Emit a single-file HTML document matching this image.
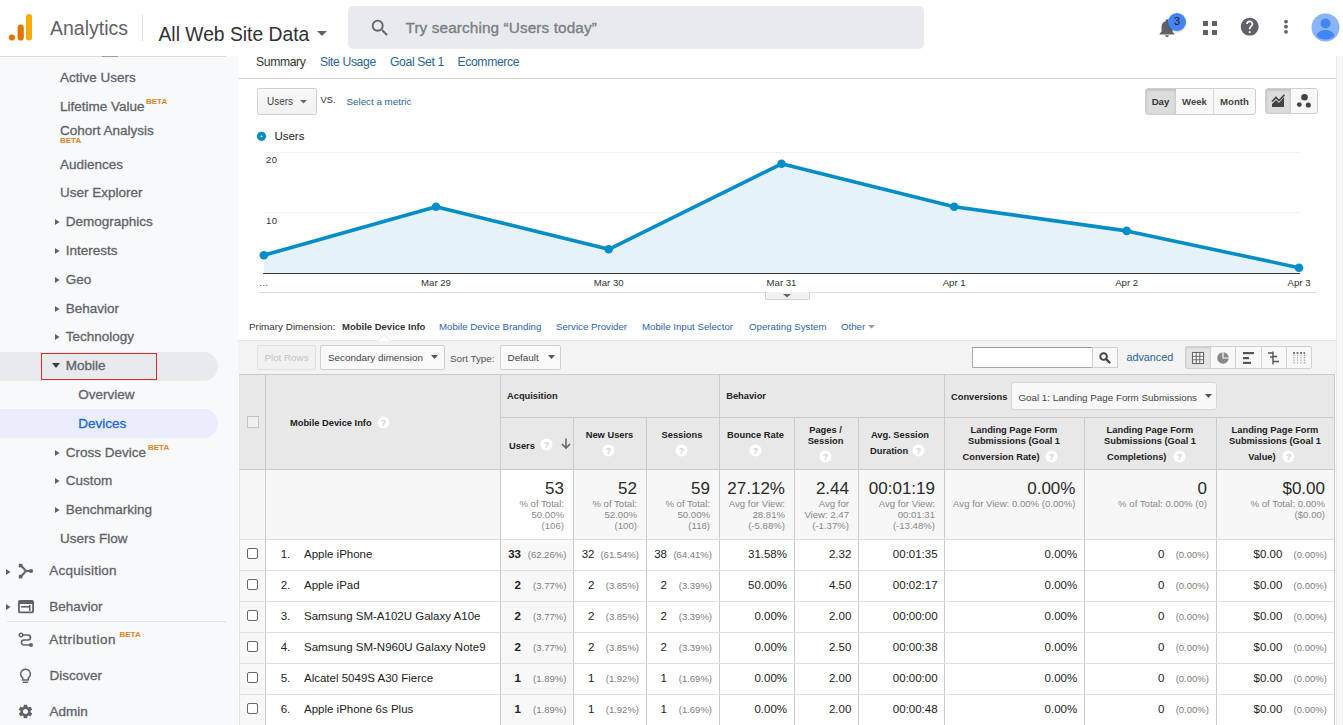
<!DOCTYPE html>
<html><head><meta charset="utf-8"><style>
html,body{margin:0;padding:0}
body{width:1343px;height:725px;overflow:hidden;position:relative;background:#fff;font-family:"Liberation Sans",sans-serif}
.t{position:absolute;white-space:nowrap;line-height:1}
.r{position:absolute;box-sizing:border-box}
svg.r{overflow:visible}
</style></head><body>
<svg class="r" style="left:0;top:0" width="140" height="56"><rect x="26" y="14" width="6" height="26.5" rx="3" fill="#f9ab00"/><rect x="17.6" y="24.6" width="6.2" height="16" rx="3.1" fill="#e37400"/><circle cx="11.9" cy="37.5" r="3.1" fill="#e37400"/></svg>
<div class="t" style="left:50.0px;top:18.5px;font-size:19.5px;color:#5f6368;font-weight:400;">Analytics</div>
<div class="r" style="left:142px;top:14px;width:1px;height:27px;background:#dadce0"></div>
<div class="t" style="left:158.5px;top:25.2px;font-size:19.3px;color:#303134;font-weight:400;">All Web Site Data</div>
<svg class="r" style="left:317px;top:31px" width="10" height="6"><path d="M0 0 L10 0 L5 5 Z" fill="#5f6368"/></svg>
<div class="r" style="left:348px;top:6px;width:576px;height:43px;background:#e8eaed;border-radius:5px"></div>
<svg class="r" style="left:369px;top:17px" width="22" height="22" viewBox="0 0 24 24"><path fill="#5f6368" d="M15.5 14h-.79l-.28-.27A6.471 6.471 0 0 0 16 9.5 6.5 6.5 0 1 0 9.5 16c1.61 0 3.09-.59 4.23-1.57l.27.28v.79l5 4.99L20.49 19l-4.99-5zm-6 0C7.01 14 5 11.99 5 9.5S7.01 5 9.5 5 14 7.01 14 9.5 11.99 14 9.5 14z"/></svg>
<div class="t" style="left:405.5px;top:20.3px;font-size:15.3px;color:#7a7f84;font-weight:400;letter-spacing:0.12px;-webkit-text-stroke:0.35px">Try searching “Users today”</div>
<svg class="r" style="left:1155.6px;top:16.7px" width="22" height="22" viewBox="0 0 24 24"><path fill="#5f6368" d="M12 22c1.1 0 2-.9 2-2h-4c0 1.1.9 2 2 2zm6-6v-5c0-3.07-1.64-5.64-4.5-6.32V4c0-.83-.67-1.5-1.5-1.5s-1.5.67-1.5 1.5v.68C7.63 5.36 6 7.92 6 11v5l-2 2v1h16v-1l-2-2z"/></svg>
<div class="r" style="left:1168px;top:12.5px;width:18px;height:18px;border-radius:50%;background:#4285f4;box-shadow:0 1px 2px rgba(0,0,0,.25)"></div>
<div class="t" style="left:1077.0px;width:200px;text-align:center;top:16.2px;font-size:11px;color:#202124;font-weight:400;">3</div>
<svg class="r" style="left:1202px;top:20px" width="16" height="16"><rect x="1" y="1" width="5" height="5" fill="#5f6368"/><rect x="10" y="1" width="5" height="5" fill="#5f6368"/><rect x="1" y="10" width="5" height="5" fill="#5f6368"/><rect x="10" y="10" width="5" height="5" fill="#5f6368"/></svg>
<svg class="r" style="left:1239.3px;top:16.1px" width="21.4" height="21.4" viewBox="0 0 24 24"><path fill="#5f6368" d="M12 2C6.48 2 2 6.48 2 12s4.48 10 10 10 10-4.48 10-10S17.52 2 12 2zm1 17h-2v-2h2v2zm2.07-7.75l-.9.92C13.45 12.9 13 13.5 13 15h-2v-.5c0-1.1.45-2.1 1.17-2.83l1.24-1.26c.37-.36.59-.86.59-1.41 0-1.1-.9-2-2-2s-2 .9-2 2H8c0-2.21 1.79-4 4-4s4 1.79 4 4c0 .88-.36 1.68-.93 2.25z"/></svg>
<svg class="r" style="left:1281px;top:17px" width="10" height="20"><circle cx="5" cy="4.6" r="1.9" fill="#5f6368"/><circle cx="5" cy="9.7" r="1.9" fill="#5f6368"/><circle cx="5" cy="14.8" r="1.9" fill="#5f6368"/></svg>
<svg class="r" style="left:1311px;top:13px" width="29" height="29" viewBox="0 0 29 29"><circle cx="14.5" cy="14.5" r="14" fill="#8ab4f8"/><circle cx="14.5" cy="10.5" r="5" fill="#4285f4"/><path d="M5.5 22.5c1.5-4 5-5.5 9-5.5s7.5 1.5 9 5.5c-2 2.5-5 4-9 4s-7-1.5-9-4z" fill="#4285f4"/></svg>
<div class="r" style="left:0px;top:56px;width:238px;height:669px;background:#f8f9fa"></div>
<div class="r" style="left:0px;top:56px;width:226px;height:1px;background:#dadce0"></div>
<div class="r" style="left:102px;top:56px;width:16px;height:1px;background:#9aa0a6"></div>
<div class="t" style="left:60.0px;top:70.6px;font-size:13.5px;color:#5f6368;font-weight:400;-webkit-text-stroke:0.3px;">Active Users</div>
<div class="t" style="left:60.0px;top:99.9px;font-size:13.5px;color:#5f6368;font-weight:400;-webkit-text-stroke:0.3px;">Lifetime Value</div>
<div class="t" style="left:146.0px;top:97.9px;font-size:8px;color:#e0821e;font-weight:700;-webkit-text-stroke:0.3px;-webkit-text-stroke:0;">BETA</div>
<div class="t" style="left:60.0px;top:124.1px;font-size:13.5px;color:#5f6368;font-weight:400;-webkit-text-stroke:0.3px;">Cohort Analysis</div>
<div class="t" style="left:60.0px;top:137.4px;font-size:8px;color:#e0821e;font-weight:700;-webkit-text-stroke:0.3px;-webkit-text-stroke:0;">BETA</div>
<div class="t" style="left:60.0px;top:158.0px;font-size:13.5px;color:#5f6368;font-weight:400;-webkit-text-stroke:0.3px;">Audiences</div>
<div class="t" style="left:60.0px;top:186.2px;font-size:13.5px;color:#5f6368;font-weight:400;-webkit-text-stroke:0.3px;">User Explorer</div>
<svg class="r" style="left:54.6px;top:219.1px" width="5" height="6"><path d="M0 0 L4.5 3 L0 6 Z" fill="#5f6368"/></svg>
<div class="t" style="left:65.8px;top:215.2px;font-size:13.5px;color:#5f6368;font-weight:400;-webkit-text-stroke:0.3px;">Demographics</div>
<svg class="r" style="left:54.6px;top:247.79999999999998px" width="5" height="6"><path d="M0 0 L4.5 3 L0 6 Z" fill="#5f6368"/></svg>
<div class="t" style="left:65.8px;top:243.9px;font-size:13.5px;color:#5f6368;font-weight:400;-webkit-text-stroke:0.3px;">Interests</div>
<svg class="r" style="left:54.6px;top:276.8px" width="5" height="6"><path d="M0 0 L4.5 3 L0 6 Z" fill="#5f6368"/></svg>
<div class="t" style="left:65.8px;top:272.9px;font-size:13.5px;color:#5f6368;font-weight:400;-webkit-text-stroke:0.3px;">Geo</div>
<svg class="r" style="left:54.6px;top:305.59999999999997px" width="5" height="6"><path d="M0 0 L4.5 3 L0 6 Z" fill="#5f6368"/></svg>
<div class="t" style="left:65.8px;top:301.7px;font-size:13.5px;color:#5f6368;font-weight:400;-webkit-text-stroke:0.3px;">Behavior</div>
<svg class="r" style="left:54.6px;top:333.8px" width="5" height="6"><path d="M0 0 L4.5 3 L0 6 Z" fill="#5f6368"/></svg>
<div class="t" style="left:65.8px;top:329.9px;font-size:13.5px;color:#5f6368;font-weight:400;-webkit-text-stroke:0.3px;">Technology</div>
<div class="r" style="left:0px;top:352px;width:218px;height:29px;background:#e8eaed;border-radius:0 14.5px 14.5px 0"></div>
<div class="r" style="left:41px;top:353px;width:116px;height:27px;border:1px solid #d93025"></div>
<svg class="r" style="left:52px;top:363px" width="8" height="6"><path d="M0 0 L8 0 L4 5 Z" fill="#3c4043"/></svg>
<div class="t" style="left:65.8px;top:359.4px;font-size:13.5px;color:#5f6368;font-weight:400;-webkit-text-stroke:0.3px;">Mobile</div>
<div class="t" style="left:78.3px;top:388.1px;font-size:13.5px;color:#5f6368;font-weight:400;-webkit-text-stroke:0.3px;">Overview</div>
<div class="r" style="left:0px;top:409px;width:218px;height:29px;background:#e9edfc;border-radius:0 14.5px 14.5px 0"></div>
<div class="t" style="left:78.3px;top:417.1px;font-size:13.5px;color:#1967d2;font-weight:400;-webkit-text-stroke:0.3px;">Devices</div>
<svg class="r" style="left:54.6px;top:449.7px" width="5" height="6"><path d="M0 0 L4.5 3 L0 6 Z" fill="#5f6368"/></svg>
<div class="t" style="left:65.8px;top:445.8px;font-size:13.5px;color:#5f6368;font-weight:400;-webkit-text-stroke:0.3px;">Cross Device</div>
<div class="t" style="left:148.0px;top:443.6px;font-size:8px;color:#e0821e;font-weight:700;-webkit-text-stroke:0.3px;-webkit-text-stroke:0;">BETA</div>
<svg class="r" style="left:54.6px;top:477.7px" width="5" height="6"><path d="M0 0 L4.5 3 L0 6 Z" fill="#5f6368"/></svg>
<div class="t" style="left:65.8px;top:473.8px;font-size:13.5px;color:#5f6368;font-weight:400;-webkit-text-stroke:0.3px;">Custom</div>
<svg class="r" style="left:54.6px;top:506.59999999999997px" width="5" height="6"><path d="M0 0 L4.5 3 L0 6 Z" fill="#5f6368"/></svg>
<div class="t" style="left:65.8px;top:502.7px;font-size:13.5px;color:#5f6368;font-weight:400;-webkit-text-stroke:0.3px;">Benchmarking</div>
<div class="t" style="left:60.0px;top:532.2px;font-size:13.5px;color:#5f6368;font-weight:400;-webkit-text-stroke:0.3px;">Users Flow</div>
<svg class="r" style="left:6px;top:568.7px" width="5" height="6"><path d="M0 0 L4.5 3 L0 6 Z" fill="#5f6368"/></svg>
<svg class="r" style="left:18px;top:563px" width="16" height="16" viewBox="0 0 16 16"><rect x="0.8" y="0.8" width="3.6" height="3.6" fill="#5f6368"/><rect x="0.8" y="11.8" width="3.6" height="3.6" fill="#5f6368"/><path d="M3 2.5 L8 8 L3 13.5 M8 8 L12 8" stroke="#5f6368" stroke-width="2" fill="none"/><circle cx="13" cy="8" r="2.1" fill="#5f6368"/></svg>
<div class="t" style="left:49.3px;top:564.1px;font-size:13.5px;color:#5f6368;font-weight:400;-webkit-text-stroke:0.3px;letter-spacing:0.2px">Acquisition</div>
<svg class="r" style="left:6px;top:604.2px" width="5" height="6"><path d="M0 0 L4.5 3 L0 6 Z" fill="#5f6368"/></svg>
<svg class="r" style="left:18px;top:600px" width="16" height="14" viewBox="0 0 16 14"><rect x="0.9" y="0.9" width="14.2" height="11.4" rx="1" fill="none" stroke="#5f6368" stroke-width="1.8"/><rect x="1" y="1" width="14" height="3" fill="#5f6368"/><rect x="3" y="6" width="8" height="1.6" fill="#5f6368"/><rect x="11" y="5" width="1.5" height="6" fill="#5f6368"/></svg>
<div class="t" style="left:49.3px;top:600.0px;font-size:13.5px;color:#5f6368;font-weight:400;-webkit-text-stroke:0.3px;">Behavior</div>
<div class="r" style="left:7px;top:621px;width:219px;height:1px;background:#e2e3e5"></div>
<svg class="r" style="left:18px;top:632px" width="16" height="16" viewBox="0 0 16 16"><circle cx="3" cy="3" r="1.8" fill="none" stroke="#5f6368" stroke-width="1.4"/><path d="M4.5 3 H10 a2.5 2.5 0 0 1 0 5 H6 a2.5 2.5 0 0 0 0 5 H12" fill="none" stroke="#5f6368" stroke-width="1.6"/><circle cx="13" cy="13" r="2" fill="#5f6368"/></svg>
<div class="t" style="left:49.3px;top:632.6px;font-size:13.5px;color:#5f6368;font-weight:400;-webkit-text-stroke:0.3px;letter-spacing:0.55px">Attribution</div>
<div class="t" style="left:119.5px;top:630.9px;font-size:8px;color:#e0821e;font-weight:700;-webkit-text-stroke:0.3px;-webkit-text-stroke:0;">BETA</div>
<svg class="r" style="left:18px;top:668px" width="15" height="16" viewBox="0 0 15 16"><path d="M7.5 1.2 a4.8 4.8 0 0 0 -2.8 8.7 V12 h5.6 V9.9 A4.8 4.8 0 0 0 7.5 1.2 z" fill="none" stroke="#5f6368" stroke-width="1.5"/><rect x="4.8" y="13.6" width="5.4" height="1.4" fill="#5f6368"/></svg>
<div class="t" style="left:49.6px;top:669.3px;font-size:13.5px;color:#5f6368;font-weight:400;-webkit-text-stroke:0.3px;">Discover</div>
<svg class="r" style="left:17px;top:703px" width="17" height="17" viewBox="0 0 24 24"><path fill="#5f6368" d="M19.14 12.94c.04-.3.06-.61.06-.94 0-.32-.02-.64-.07-.94l2.03-1.58a.49.49 0 0 0 .12-.61l-1.92-3.32a.488.488 0 0 0-.59-.22l-2.39.96c-.5-.38-1.03-.7-1.62-.94l-.36-2.54a.484.484 0 0 0-.48-.41h-3.84c-.24 0-.43.17-.47.41l-.36 2.54c-.59.24-1.13.57-1.62.94l-2.39-.96c-.22-.08-.47 0-.59.22L2.74 8.87c-.12.21-.08.47.12.61l2.03 1.58c-.05.3-.09.63-.09.94s.02.64.07.94l-2.03 1.58a.49.49 0 0 0-.12.61l1.92 3.32c.12.22.37.29.59.22l2.39-.96c.5.38 1.03.7 1.62.94l.36 2.54c.05.24.24.41.48.41h3.84c.24 0 .44-.17.47-.41l.36-2.54c.59-.24 1.13-.56 1.62-.94l2.39.96c.22.08.47 0 .59-.22l1.92-3.32c.12-.22.07-.47-.12-.61l-2.01-1.58zM12 15.6c-1.98 0-3.6-1.62-3.6-3.6s1.62-3.6 3.6-3.6 3.6 1.62 3.6 3.6-1.62 3.6-3.6 3.6z"/></svg>
<div class="t" style="left:49.6px;top:705.0px;font-size:13.5px;color:#5f6368;font-weight:400;-webkit-text-stroke:0.3px;">Admin</div>
<div class="r" style="left:1336px;top:56px;width:7px;height:669px;background:#f8f8f8;border-left:1px solid #e8e8e8"></div>
<div class="t" style="left:256.0px;top:55.9px;font-size:12.2px;color:#333;font-weight:400;letter-spacing:-0.38px">Summary</div>
<div class="t" style="left:320.0px;top:55.9px;font-size:12.2px;color:#2a6496;font-weight:400;letter-spacing:-0.38px">Site Usage</div>
<div class="t" style="left:390.0px;top:55.9px;font-size:12.2px;color:#2a6496;font-weight:400;letter-spacing:-0.38px">Goal Set 1</div>
<div class="t" style="left:457.5px;top:55.9px;font-size:12.2px;color:#2a6496;font-weight:400;letter-spacing:-0.38px">Ecommerce</div>
<div class="r" style="left:238px;top:78px;width:1098px;height:1px;background:#d4d4d4"></div>
<div class="r" style="left:257px;top:88px;width:60px;height:27px;border:1px solid #d0d0d0;border-radius:2px;background:linear-gradient(#f8f8f8,#f1f1f1)"></div>
<div class="t" style="left:267.0px;top:96.5px;font-size:10px;color:#444;font-weight:400;">Users</div>
<svg class="r" style="left:300px;top:100px" width="8" height="5"><path d="M0 0 L7 0 L3.5 3.5 Z" fill="#666"/></svg>
<div class="t" style="left:320.6px;top:95.0px;font-size:9.4px;color:#333;font-weight:400;">VS.</div>
<div class="t" style="left:346.5px;top:96.7px;font-size:9.8px;color:#2a6496;font-weight:400;">Select a metric</div>
<div class="r" style="left:1145px;top:88px;width:111px;height:27px;border:1px solid #cfcfcf;border-radius:3px;background:#f8f8f8"></div>
<div class="r" style="left:1146px;top:89px;width:30px;height:25px;background:#dcdcdc;box-shadow:inset 0 1px 3px rgba(0,0,0,.18);border-radius:2px 0 0 2px"></div>
<div class="r" style="left:1213px;top:89px;width:1px;height:25px;background:#d8d8d8"></div>
<div class="t" style="left:1060.5px;width:200px;text-align:center;top:96.5px;font-size:9.6px;color:#333;font-weight:700;">Day</div>
<div class="t" style="left:1094.5px;width:200px;text-align:center;top:96.5px;font-size:9.6px;color:#444;font-weight:700;">Week</div>
<div class="t" style="left:1134.5px;width:200px;text-align:center;top:96.5px;font-size:9.6px;color:#444;font-weight:700;">Month</div>
<div class="r" style="left:1265px;top:88px;width:53px;height:26px;border:1px solid #cfcfcf;border-radius:3px;background:#f8f8f8"></div>
<div class="r" style="left:1266px;top:89px;width:25px;height:24px;background:#dcdcdc;box-shadow:inset 0 1px 3px rgba(0,0,0,.18);border-radius:2px 0 0 2px"></div>
<svg class="r" style="left:1271px;top:94px" width="15" height="14" viewBox="0 0 15 14"><path d="M1 13 L1 10 L5 6 L8 9 L13 3 L13 13 Z" fill="#444"/><path d="M1 7.5 L5 3.5 L8 6.5 L13.5 0.8" stroke="#444" stroke-width="1.6" fill="none"/></svg>
<svg class="r" style="left:1295px;top:92px" width="18" height="18"><circle cx="9.5" cy="5.3" r="3.3" fill="#444"/><circle cx="4.3" cy="12.6" r="2.4" fill="#444"/><circle cx="13.3" cy="13" r="2.6" fill="#444"/></svg>
<svg class="r" style="left:256px;top:131px" width="11" height="11"><circle cx="5.5" cy="5.3" r="4.6" fill="#058dc7"/><circle cx="5.5" cy="5.3" r="0.9" fill="#fff"/></svg>
<div class="t" style="left:274.4px;top:131.1px;font-size:11.5px;color:#222;font-weight:400;">Users</div>
<svg class="r" style="left:0;top:0" width="1343" height="310">
<line x1="263" y1="152.5" x2="1300" y2="152.5" stroke="#f0f0f0" stroke-width="1"/>
<line x1="263" y1="212.5" x2="1300" y2="212.5" stroke="#f0f0f0" stroke-width="1"/>
<polygon points="263.8,273 263.8,255.3 436,206.7 608.7,249.3 781.5,163.8 954.2,206.7 1126.7,230.9 1299,267.7 1299,273" fill="#e5f2f9"/>
<line x1="263" y1="273.5" x2="1300" y2="273.5" stroke="#333" stroke-width="1"/>
<polyline points="263.8,255.3 436,206.7 608.7,249.3 781.5,163.8 954.2,206.7 1126.7,230.9 1299,267.7" fill="none" stroke="#058dc7" stroke-width="3.6" stroke-linejoin="round"/>
<circle cx="263.8" cy="255.3" r="4.3" fill="#058dc7"/><circle cx="436" cy="206.7" r="4.3" fill="#058dc7"/><circle cx="608.7" cy="249.3" r="4.3" fill="#058dc7"/><circle cx="781.5" cy="163.8" r="4.3" fill="#058dc7"/><circle cx="954.2" cy="206.7" r="4.3" fill="#058dc7"/><circle cx="1126.7" cy="230.9" r="4.3" fill="#058dc7"/><circle cx="1299" cy="267.7" r="4.3" fill="#058dc7"/>
<line x1="258" y1="292.5" x2="1316" y2="292.5" stroke="#dcdcdc" stroke-width="1"/>
</svg>
<div class="t" style="left:266.0px;top:154.9px;font-size:9.6px;color:#333;font-weight:400;letter-spacing:0.5px">20</div>
<div class="t" style="left:266.0px;top:216.3px;font-size:9.6px;color:#333;font-weight:400;letter-spacing:0.5px">10</div>
<div class="t" style="left:163.8px;width:200px;text-align:center;top:277.9px;font-size:9.6px;color:#333;font-weight:400;">…</div>
<div class="t" style="left:336.0px;width:200px;text-align:center;top:277.9px;font-size:9.6px;color:#333;font-weight:400;">Mar 29</div>
<div class="t" style="left:508.7px;width:200px;text-align:center;top:277.9px;font-size:9.6px;color:#333;font-weight:400;">Mar 30</div>
<div class="t" style="left:681.5px;width:200px;text-align:center;top:277.9px;font-size:9.6px;color:#333;font-weight:400;">Mar 31</div>
<div class="t" style="left:854.2px;width:200px;text-align:center;top:277.9px;font-size:9.6px;color:#333;font-weight:400;">Apr 1</div>
<div class="t" style="left:1026.7px;width:200px;text-align:center;top:277.9px;font-size:9.6px;color:#333;font-weight:400;">Apr 2</div>
<div class="t" style="left:1199.0px;width:200px;text-align:center;top:277.9px;font-size:9.6px;color:#333;font-weight:400;">Apr 3</div>
<div class="r" style="left:765px;top:292px;width:45px;height:8px;border:1px solid #d0d0d0;border-top:none;background:#f1f1f1;border-radius:0 0 2px 2px"></div>
<svg class="r" style="left:783px;top:294px" width="8" height="4"><path d="M0 0 L8 0 L4 3.5 Z" fill="#666"/></svg>
<div class="t" style="left:249.0px;top:321.5px;font-size:9.9px;color:#333;font-weight:400;">Primary Dimension:</div>
<div class="t" style="left:342.0px;top:321.9px;font-size:9.5px;color:#333;font-weight:700;">Mobile Device Info</div>
<div class="t" style="left:439.0px;top:321.7px;font-size:9.7px;color:#2d5fb0;font-weight:400;">Mobile Device Branding</div>
<div class="t" style="left:556.0px;top:321.7px;font-size:9.7px;color:#2d5fb0;font-weight:400;">Service Provider</div>
<div class="t" style="left:642.0px;top:321.7px;font-size:9.7px;color:#2d5fb0;font-weight:400;">Mobile Input Selector</div>
<div class="t" style="left:749.0px;top:321.7px;font-size:9.7px;color:#2d5fb0;font-weight:400;">Operating System</div>
<div class="t" style="left:841.0px;top:321.7px;font-size:9.7px;color:#2d5fb0;font-weight:400;">Other</div>
<svg class="r" style="left:868px;top:325px" width="7" height="4"><path d="M0 0 L7 0 L3.5 3.5 Z" fill="#999"/></svg>
<div class="r" style="left:238px;top:340px;width:1098px;height:34px;background:#f3f3f3;border-top:1px solid #e6e6e6"></div>
<svg class="r" style="left:377px;top:334px" width="14" height="8"><path d="M0 7 L7 0.5 L14 7" fill="#fff" stroke="#e6e6e6" stroke-width="1"/></svg>
<div class="r" style="left:257px;top:345px;width:59px;height:25px;border:1px solid #e0e0e0;border-radius:2px;background:#f1f1f1"></div>
<div class="t" style="left:186.5px;width:200px;text-align:center;top:352.7px;font-size:9.8px;color:#c4c4c4;font-weight:400;">Plot Rows</div>
<div class="r" style="left:320px;top:345px;width:125px;height:25px;border:1px solid #d0d0d0;border-radius:2px;background:linear-gradient(#f8f8f8,#f1f1f1);background:#fafafa"></div>
<div class="t" style="left:328.0px;top:352.6px;font-size:9.9px;color:#444;font-weight:400;">Secondary dimension</div>
<svg class="r" style="left:431px;top:355px" width="8" height="5"><path d="M0 0 L7 0 L3.5 4 Z" fill="#555"/></svg>
<div class="t" style="left:450.0px;top:353.5px;font-size:9.8px;color:#555;font-weight:400;">Sort Type:</div>
<div class="r" style="left:500px;top:345px;width:61px;height:25px;border:1px solid #d0d0d0;border-radius:2px;background:linear-gradient(#f8f8f8,#f1f1f1);background:#fafafa"></div>
<div class="t" style="left:507.5px;top:353.1px;font-size:9.9px;color:#444;font-weight:400;">Default</div>
<svg class="r" style="left:548px;top:355px" width="8" height="5"><path d="M0 0 L7 0 L3.5 4 Z" fill="#555"/></svg>
<div class="r" style="left:972px;top:347px;width:121px;height:21px;border:1px solid #aaa;border-top-color:#999;background:#fff"></div>
<div class="r" style="left:1092px;top:347px;width:26px;height:21px;border:1px solid #cfcfcf;background:#f8f8f8"></div>
<svg class="r" style="left:1099px;top:352px" width="12" height="12" viewBox="0 0 12 12"><circle cx="4.6" cy="4.6" r="3.3" fill="none" stroke="#444" stroke-width="1.9"/><path d="M7 7 L10.5 10.5" stroke="#444" stroke-width="2.4" stroke-linecap="round"/></svg>
<div class="t" style="left:1126.4px;top:351.5px;font-size:10.8px;color:#2a6496;font-weight:400;">advanced</div>
<div class="r" style="left:1185px;top:346px;width:127px;height:23px;border:1px solid #cfcfcf;border-radius:2px;background:#f8f8f8"></div>
<div class="r" style="left:1186px;top:347px;width:25px;height:21px;background:#e4e4e4;box-shadow:inset 0 1px 2px rgba(0,0,0,.12)"></div>
<div class="r" style="left:1210px;top:347px;width:1px;height:21px;background:#d4d4d4"></div>
<div class="r" style="left:1235px;top:347px;width:1px;height:21px;background:#d4d4d4"></div>
<div class="r" style="left:1261px;top:347px;width:1px;height:21px;background:#d4d4d4"></div>
<div class="r" style="left:1286px;top:347px;width:1px;height:21px;background:#d4d4d4"></div>
<svg class="r" style="left:1191px;top:351px" width="14" height="14" viewBox="0 0 14 14"><rect x="1.5" y="1.5" width="11" height="11" fill="#fff" stroke="#666" stroke-width="1.1"/><path d="M5.2 1.5 V12.5 M8.8 1.5 V12.5 M1.5 5.2 H12.5 M1.5 8.8 H12.5" stroke="#666" stroke-width="1.1"/></svg>
<svg class="r" style="left:1216px;top:351px" width="14" height="14" viewBox="0 0 14 14"><circle cx="7" cy="7" r="5.8" fill="#888"/><path d="M7 1 V7 H13" stroke="#f8f8f8" stroke-width="1.2" fill="none"/></svg>
<svg class="r" style="left:1242px;top:351px" width="14" height="14" viewBox="0 0 14 14"><rect x="1" y="1" width="11" height="2.2" fill="#555"/><rect x="1" y="6" width="6" height="2.2" fill="#555"/><rect x="1" y="10.8" width="8" height="2.2" fill="#555"/></svg>
<svg class="r" style="left:1267px;top:351px" width="14" height="14" viewBox="0 0 14 14"><path d="M6 0.5 V13.5" stroke="#555" stroke-width="1.4"/><path d="M1 2 H6 M3 6 H6 M6 10.5 H12 M6 5.5 H10" stroke="#555" stroke-width="1.6"/></svg>
<svg class="r" style="left:1292px;top:351px" width="14" height="14" viewBox="0 0 14 14"><path d="M2 1 V13 M5.5 1 V13 M9 1 V13 M12.5 1 V13" stroke="#aaa" stroke-width="1.1" stroke-dasharray="1.5 1"/><path d="M1 2 H13" stroke="#666" stroke-width="1.4" stroke-dasharray="2 1.5"/></svg>
<div class="r" style="left:239px;top:374px;width:1096px;height:95px;background:#e8e8e8"></div>
<div class="r" style="left:239px;top:469px;width:1096px;height:70px;background:#f7f7f7"></div>
<div class="r" style="left:501px;top:470px;width:72px;height:69px;background:#fff"></div>
<div class="r" style="left:239px;top:539px;width:1096px;height:186px;background:#fff"></div>
<div class="r" style="left:240px;top:539px;width:25px;height:186px;background:#f8f8f8"></div>
<div class="r" style="left:501px;top:539px;width:72px;height:186px;background:#f8f8f8"></div>
<div class="r" style="left:239px;top:374px;width:1px;height:351px;background:#e2e2e2"></div>
<div class="r" style="left:265px;top:374px;width:1px;height:351px;background:#cbcbcb"></div>
<div class="r" style="left:500px;top:374px;width:1px;height:351px;background:#cbcbcb"></div>
<div class="r" style="left:573px;top:374px;width:1px;height:351px;background:#cbcbcb"></div>
<div class="r" style="left:646px;top:374px;width:1px;height:351px;background:#cbcbcb"></div>
<div class="r" style="left:719px;top:374px;width:1px;height:351px;background:#cbcbcb"></div>
<div class="r" style="left:794px;top:374px;width:1px;height:351px;background:#cbcbcb"></div>
<div class="r" style="left:858px;top:374px;width:1px;height:351px;background:#cbcbcb"></div>
<div class="r" style="left:944px;top:374px;width:1px;height:351px;background:#cbcbcb"></div>
<div class="r" style="left:1084px;top:374px;width:1px;height:351px;background:#cbcbcb"></div>
<div class="r" style="left:1216px;top:374px;width:1px;height:351px;background:#cbcbcb"></div>
<div class="r" style="left:1334px;top:374px;width:1px;height:351px;background:#cbcbcb"></div>
<div class="r" style="left:239px;top:374px;width:1096px;height:1px;background:#cbcbcb"></div>
<div class="r" style="left:500px;top:417px;width:835px;height:1px;background:#cbcbcb"></div>
<div class="r" style="left:239px;top:469px;width:1096px;height:1px;background:#cbcbcb"></div>
<div class="r" style="left:239px;top:539px;width:1096px;height:1px;background:#dedede"></div>
<div class="r" style="left:239px;top:570px;width:1096px;height:1px;background:#dedede"></div>
<div class="r" style="left:239px;top:601px;width:1096px;height:1px;background:#dedede"></div>
<div class="r" style="left:239px;top:632px;width:1096px;height:1px;background:#dedede"></div>
<div class="r" style="left:239px;top:663px;width:1096px;height:1px;background:#dedede"></div>
<div class="r" style="left:239px;top:694px;width:1096px;height:1px;background:#dedede"></div>
<div class="r" style="left:573px;top:375px;width:1px;height:42px;background:#e8e8e8"></div>
<div class="r" style="left:646px;top:375px;width:1px;height:42px;background:#e8e8e8"></div>
<div class="r" style="left:794px;top:375px;width:1px;height:42px;background:#e8e8e8"></div>
<div class="r" style="left:858px;top:375px;width:1px;height:42px;background:#e8e8e8"></div>
<div class="r" style="left:1084px;top:375px;width:1px;height:42px;background:#e8e8e8"></div>
<div class="r" style="left:1216px;top:375px;width:1px;height:42px;background:#e8e8e8"></div>
<div class="r" style="left:247px;top:416px;width:12px;height:12px;border:1px solid #c4c4c4;background:#f0f0f0"></div>
<div class="t" style="left:290.0px;top:419.3px;font-size:9.3px;color:#222;font-weight:700;">Mobile Device Info</div>
<svg class="r" style="left:376.9px;top:415.5px" width="13" height="13"><circle cx="6.5" cy="6.5" r="6" fill="#fff"/><text x="6.5" y="10" font-family="Liberation Sans" font-size="9" font-weight="700" fill="#d0d0d0" text-anchor="middle">?</text></svg>
<div class="t" style="left:507.0px;top:391.8px;font-size:9.3px;color:#222;font-weight:700;">Acquisition</div>
<div class="t" style="left:726.2px;top:391.7px;font-size:9.3px;color:#222;font-weight:700;">Behavior</div>
<div class="t" style="left:951.0px;top:392.8px;font-size:9.3px;color:#222;font-weight:700;">Conversions</div>
<div class="r" style="left:1011px;top:382px;width:206px;height:28px;border:1px solid #d6d6d6;border-radius:3px;background:#f8f8f8"></div>
<div class="t" style="left:1018.4px;top:392.5px;font-size:9.8px;color:#444;font-weight:400;">Goal 1: Landing Page Form Submissions</div>
<svg class="r" style="left:1205px;top:394px" width="8" height="5"><path d="M0 0 L7 0 L3.5 4 Z" fill="#555"/></svg>
<div class="t" style="left:509.0px;top:441.5px;font-size:9.3px;color:#222;font-weight:700;">Users</div>
<svg class="r" style="left:539.5px;top:438.3px" width="13" height="13"><circle cx="6.5" cy="6.5" r="6" fill="#fff"/><text x="6.5" y="10" font-family="Liberation Sans" font-size="9" font-weight="700" fill="#d0d0d0" text-anchor="middle">?</text></svg>
<svg class="r" style="left:561px;top:438px" width="10" height="11" viewBox="0 0 10 11"><path d="M5 0.5 V10" stroke="#666" stroke-width="1.6"/><path d="M1 6 L5 10 L9 6" stroke="#666" stroke-width="1.6" fill="none"/></svg>
<div class="t" style="left:509.5px;width:200px;text-align:center;top:430.9px;font-size:9.3px;color:#222;font-weight:700;">New Users</div>
<svg class="r" style="left:601.9px;top:443.7px" width="13" height="13"><circle cx="6.5" cy="6.5" r="6" fill="#fff"/><text x="6.5" y="10" font-family="Liberation Sans" font-size="9" font-weight="700" fill="#d0d0d0" text-anchor="middle">?</text></svg>
<div class="t" style="left:582.0px;width:200px;text-align:center;top:430.9px;font-size:9.3px;color:#222;font-weight:700;">Sessions</div>
<svg class="r" style="left:674.9px;top:443.7px" width="13" height="13"><circle cx="6.5" cy="6.5" r="6" fill="#fff"/><text x="6.5" y="10" font-family="Liberation Sans" font-size="9" font-weight="700" fill="#d0d0d0" text-anchor="middle">?</text></svg>
<div class="t" style="left:655.5px;width:200px;text-align:center;top:430.8px;font-size:9.3px;color:#222;font-weight:700;">Bounce Rate</div>
<svg class="r" style="left:749.0px;top:443.9px" width="13" height="13"><circle cx="6.5" cy="6.5" r="6" fill="#fff"/><text x="6.5" y="10" font-family="Liberation Sans" font-size="9" font-weight="700" fill="#d0d0d0" text-anchor="middle">?</text></svg>
<div class="t" style="left:725.5px;width:200px;text-align:center;top:425.7px;font-size:9.3px;color:#222;font-weight:700;">Pages /</div>
<div class="t" style="left:725.5px;width:200px;text-align:center;top:436.9px;font-size:9.3px;color:#222;font-weight:700;">Session</div>
<svg class="r" style="left:819.0px;top:449.5px" width="13" height="13"><circle cx="6.5" cy="6.5" r="6" fill="#fff"/><text x="6.5" y="10" font-family="Liberation Sans" font-size="9" font-weight="700" fill="#d0d0d0" text-anchor="middle">?</text></svg>
<div class="t" style="left:800.0px;width:200px;text-align:center;top:430.8px;font-size:9.3px;color:#222;font-weight:700;">Avg. Session</div>
<div class="t" style="left:870.0px;top:446.7px;font-size:9.3px;color:#222;font-weight:700;">Duration</div>
<svg class="r" style="left:912.4px;top:443.9px" width="13" height="13"><circle cx="6.5" cy="6.5" r="6" fill="#fff"/><text x="6.5" y="10" font-family="Liberation Sans" font-size="9" font-weight="700" fill="#d0d0d0" text-anchor="middle">?</text></svg>
<div class="t" style="left:914.0px;width:200px;text-align:center;top:425.7px;font-size:9.3px;color:#222;font-weight:700;">Landing Page Form</div>
<div class="t" style="left:914.0px;width:200px;text-align:center;top:436.9px;font-size:9.3px;color:#222;font-weight:700;">Submissions (Goal 1</div>
<div class="t" style="left:962.5px;top:452.9px;font-size:9.3px;color:#222;font-weight:700;">Conversion Rate)</div>
<svg class="r" style="left:1045.0px;top:449.5px" width="13" height="13"><circle cx="6.5" cy="6.5" r="6" fill="#fff"/><text x="6.5" y="10" font-family="Liberation Sans" font-size="9" font-weight="700" fill="#d0d0d0" text-anchor="middle">?</text></svg>
<div class="t" style="left:1050.0px;width:200px;text-align:center;top:425.7px;font-size:9.3px;color:#222;font-weight:700;">Landing Page Form</div>
<div class="t" style="left:1050.0px;width:200px;text-align:center;top:436.9px;font-size:9.3px;color:#222;font-weight:700;">Submissions (Goal 1</div>
<div class="t" style="left:1107.0px;top:452.9px;font-size:9.3px;color:#222;font-weight:700;">Completions)</div>
<svg class="r" style="left:1172.5px;top:449.5px" width="13" height="13"><circle cx="6.5" cy="6.5" r="6" fill="#fff"/><text x="6.5" y="10" font-family="Liberation Sans" font-size="9" font-weight="700" fill="#d0d0d0" text-anchor="middle">?</text></svg>
<div class="t" style="left:1175.0px;width:200px;text-align:center;top:425.7px;font-size:9.3px;color:#222;font-weight:700;">Landing Page Form</div>
<div class="t" style="left:1175.0px;width:200px;text-align:center;top:436.9px;font-size:9.3px;color:#222;font-weight:700;">Submissions (Goal 1</div>
<div class="t" style="left:1248.2px;top:452.9px;font-size:9.3px;color:#222;font-weight:700;">Value)</div>
<svg class="r" style="left:1281.7px;top:449.5px" width="13" height="13"><circle cx="6.5" cy="6.5" r="6" fill="#fff"/><text x="6.5" y="10" font-family="Liberation Sans" font-size="9" font-weight="700" fill="#d0d0d0" text-anchor="middle">?</text></svg>
<div class="t" style="right:779.0px;top:479.8px;font-size:17px;color:#2a2a2a;font-weight:400;">53</div>
<div class="t" style="right:779.0px;top:499.3px;font-size:9.6px;color:#888;font-weight:400;">% of Total:</div>
<div class="t" style="right:779.0px;top:510.0px;font-size:9.6px;color:#888;font-weight:400;">50.00%</div>
<div class="t" style="right:779.0px;top:520.7px;font-size:9.6px;color:#888;font-weight:400;">(106)</div>
<div class="t" style="right:706.0px;top:479.8px;font-size:17px;color:#2a2a2a;font-weight:400;">52</div>
<div class="t" style="right:706.0px;top:499.3px;font-size:9.6px;color:#888;font-weight:400;">% of Total:</div>
<div class="t" style="right:706.0px;top:510.0px;font-size:9.6px;color:#888;font-weight:400;">52.00%</div>
<div class="t" style="right:706.0px;top:520.7px;font-size:9.6px;color:#888;font-weight:400;">(100)</div>
<div class="t" style="right:633.0px;top:479.8px;font-size:17px;color:#2a2a2a;font-weight:400;">59</div>
<div class="t" style="right:633.0px;top:499.3px;font-size:9.6px;color:#888;font-weight:400;">% of Total:</div>
<div class="t" style="right:633.0px;top:510.0px;font-size:9.6px;color:#888;font-weight:400;">50.00%</div>
<div class="t" style="right:633.0px;top:520.7px;font-size:9.6px;color:#888;font-weight:400;">(118)</div>
<div class="t" style="right:558.0px;top:479.8px;font-size:17px;color:#2a2a2a;font-weight:400;">27.12%</div>
<div class="t" style="right:558.0px;top:499.3px;font-size:9.6px;color:#888;font-weight:400;">Avg for View:</div>
<div class="t" style="right:558.0px;top:510.0px;font-size:9.6px;color:#888;font-weight:400;">28.81%</div>
<div class="t" style="right:558.0px;top:520.7px;font-size:9.6px;color:#888;font-weight:400;">(-5.88%)</div>
<div class="t" style="right:494.0px;top:479.8px;font-size:17px;color:#2a2a2a;font-weight:400;">2.44</div>
<div class="t" style="right:494.0px;top:499.3px;font-size:9.6px;color:#888;font-weight:400;">Avg for</div>
<div class="t" style="right:494.0px;top:510.0px;font-size:9.6px;color:#888;font-weight:400;">View: 2.47</div>
<div class="t" style="right:494.0px;top:520.7px;font-size:9.6px;color:#888;font-weight:400;">(-1.37%)</div>
<div class="t" style="right:408.0px;top:479.8px;font-size:17px;color:#2a2a2a;font-weight:400;">00:01:19</div>
<div class="t" style="right:408.0px;top:499.3px;font-size:9.6px;color:#888;font-weight:400;">Avg for View:</div>
<div class="t" style="right:408.0px;top:510.0px;font-size:9.6px;color:#888;font-weight:400;">00:01:31</div>
<div class="t" style="right:408.0px;top:520.7px;font-size:9.6px;color:#888;font-weight:400;">(-13.48%)</div>
<div class="t" style="right:267.6px;top:479.8px;font-size:17px;color:#2a2a2a;font-weight:400;">0.00%</div>
<div class="t" style="right:267.6px;top:499.3px;font-size:9.6px;color:#888;font-weight:400;">Avg for View: 0.00% (0.00%)</div>
<div class="t" style="right:136.0px;top:479.8px;font-size:17px;color:#2a2a2a;font-weight:400;">0</div>
<div class="t" style="right:136.0px;top:499.3px;font-size:9.6px;color:#888;font-weight:400;">% of Total: 0.00% (0)</div>
<div class="t" style="right:18.0px;top:479.8px;font-size:17px;color:#2a2a2a;font-weight:400;">$0.00</div>
<div class="t" style="right:18.0px;top:499.3px;font-size:9.6px;color:#888;font-weight:400;">% of Total: 0.00%</div>
<div class="t" style="right:18.0px;top:510.0px;font-size:9.6px;color:#888;font-weight:400;">($0.00)</div>
<div class="r" style="left:247px;top:548px;width:11px;height:11px;border:1.3px solid #666;border-radius:2px;background:#fff"></div>
<div class="t" style="left:280.7px;top:548.7px;font-size:11.5px;color:#222;font-weight:400;">1.</div>
<div class="t" style="left:304.0px;top:548.7px;font-size:11.5px;color:#222;font-weight:400;">Apple iPhone</div>
<div class="t" style="right:822.0px;top:548.7px;font-size:11.5px;color:#222;font-weight:700;">33</div>
<div class="t" style="right:776.7px;top:550.4px;font-size:9.5px;color:#7c7c7c;font-weight:400;">(62.26%)</div>
<div class="t" style="right:748.5px;top:548.7px;font-size:11.5px;color:#222;font-weight:400;">32</div>
<div class="t" style="right:704.0px;top:550.4px;font-size:9.5px;color:#7c7c7c;font-weight:400;">(61.54%)</div>
<div class="t" style="right:676.0px;top:548.7px;font-size:11.5px;color:#222;font-weight:400;">38</div>
<div class="t" style="right:631.0px;top:550.4px;font-size:9.5px;color:#7c7c7c;font-weight:400;">(64.41%)</div>
<div class="t" style="right:556.0px;top:548.7px;font-size:11.5px;color:#222;font-weight:400;">31.58%</div>
<div class="t" style="right:491.7px;top:548.7px;font-size:11.5px;color:#222;font-weight:400;">2.32</div>
<div class="t" style="right:405.4px;top:548.7px;font-size:11.5px;color:#222;font-weight:400;">00:01:35</div>
<div class="t" style="right:265.8px;top:548.7px;font-size:11.5px;color:#222;font-weight:400;">0.00%</div>
<div class="t" style="right:178.6px;top:548.7px;font-size:11.5px;color:#222;font-weight:400;">0</div>
<div class="t" style="right:134.1px;top:550.4px;font-size:9.5px;color:#7c7c7c;font-weight:400;">(0.00%)</div>
<div class="t" style="right:60.7px;top:548.7px;font-size:11.5px;color:#222;font-weight:400;">$0.00</div>
<div class="t" style="right:16.2px;top:550.4px;font-size:9.5px;color:#7c7c7c;font-weight:400;">(0.00%)</div>
<div class="r" style="left:247px;top:579px;width:11px;height:11px;border:1.3px solid #666;border-radius:2px;background:#fff"></div>
<div class="t" style="left:280.7px;top:579.7px;font-size:11.5px;color:#222;font-weight:400;">2.</div>
<div class="t" style="left:304.0px;top:579.7px;font-size:11.5px;color:#222;font-weight:400;">Apple iPad</div>
<div class="t" style="right:822.0px;top:579.7px;font-size:11.5px;color:#222;font-weight:700;">2</div>
<div class="t" style="right:776.7px;top:581.4px;font-size:9.5px;color:#7c7c7c;font-weight:400;">(3.77%)</div>
<div class="t" style="right:748.5px;top:579.7px;font-size:11.5px;color:#222;font-weight:400;">2</div>
<div class="t" style="right:704.0px;top:581.4px;font-size:9.5px;color:#7c7c7c;font-weight:400;">(3.85%)</div>
<div class="t" style="right:676.0px;top:579.7px;font-size:11.5px;color:#222;font-weight:400;">2</div>
<div class="t" style="right:631.0px;top:581.4px;font-size:9.5px;color:#7c7c7c;font-weight:400;">(3.39%)</div>
<div class="t" style="right:556.0px;top:579.7px;font-size:11.5px;color:#222;font-weight:400;">50.00%</div>
<div class="t" style="right:491.7px;top:579.7px;font-size:11.5px;color:#222;font-weight:400;">4.50</div>
<div class="t" style="right:405.4px;top:579.7px;font-size:11.5px;color:#222;font-weight:400;">00:02:17</div>
<div class="t" style="right:265.8px;top:579.7px;font-size:11.5px;color:#222;font-weight:400;">0.00%</div>
<div class="t" style="right:178.6px;top:579.7px;font-size:11.5px;color:#222;font-weight:400;">0</div>
<div class="t" style="right:134.1px;top:581.4px;font-size:9.5px;color:#7c7c7c;font-weight:400;">(0.00%)</div>
<div class="t" style="right:60.7px;top:579.7px;font-size:11.5px;color:#222;font-weight:400;">$0.00</div>
<div class="t" style="right:16.2px;top:581.4px;font-size:9.5px;color:#7c7c7c;font-weight:400;">(0.00%)</div>
<div class="r" style="left:247px;top:610px;width:11px;height:11px;border:1.3px solid #666;border-radius:2px;background:#fff"></div>
<div class="t" style="left:280.7px;top:610.7px;font-size:11.5px;color:#222;font-weight:400;">3.</div>
<div class="t" style="left:304.0px;top:610.7px;font-size:11.5px;color:#222;font-weight:400;">Samsung SM-A102U Galaxy A10e</div>
<div class="t" style="right:822.0px;top:610.7px;font-size:11.5px;color:#222;font-weight:700;">2</div>
<div class="t" style="right:776.7px;top:612.4px;font-size:9.5px;color:#7c7c7c;font-weight:400;">(3.77%)</div>
<div class="t" style="right:748.5px;top:610.7px;font-size:11.5px;color:#222;font-weight:400;">2</div>
<div class="t" style="right:704.0px;top:612.4px;font-size:9.5px;color:#7c7c7c;font-weight:400;">(3.85%)</div>
<div class="t" style="right:676.0px;top:610.7px;font-size:11.5px;color:#222;font-weight:400;">2</div>
<div class="t" style="right:631.0px;top:612.4px;font-size:9.5px;color:#7c7c7c;font-weight:400;">(3.39%)</div>
<div class="t" style="right:556.0px;top:610.7px;font-size:11.5px;color:#222;font-weight:400;">0.00%</div>
<div class="t" style="right:491.7px;top:610.7px;font-size:11.5px;color:#222;font-weight:400;">2.00</div>
<div class="t" style="right:405.4px;top:610.7px;font-size:11.5px;color:#222;font-weight:400;">00:00:00</div>
<div class="t" style="right:265.8px;top:610.7px;font-size:11.5px;color:#222;font-weight:400;">0.00%</div>
<div class="t" style="right:178.6px;top:610.7px;font-size:11.5px;color:#222;font-weight:400;">0</div>
<div class="t" style="right:134.1px;top:612.4px;font-size:9.5px;color:#7c7c7c;font-weight:400;">(0.00%)</div>
<div class="t" style="right:60.7px;top:610.7px;font-size:11.5px;color:#222;font-weight:400;">$0.00</div>
<div class="t" style="right:16.2px;top:612.4px;font-size:9.5px;color:#7c7c7c;font-weight:400;">(0.00%)</div>
<div class="r" style="left:247px;top:641px;width:11px;height:11px;border:1.3px solid #666;border-radius:2px;background:#fff"></div>
<div class="t" style="left:280.7px;top:641.7px;font-size:11.5px;color:#222;font-weight:400;">4.</div>
<div class="t" style="left:304.0px;top:641.7px;font-size:11.5px;color:#222;font-weight:400;">Samsung SM-N960U Galaxy Note9</div>
<div class="t" style="right:822.0px;top:641.7px;font-size:11.5px;color:#222;font-weight:700;">2</div>
<div class="t" style="right:776.7px;top:643.4px;font-size:9.5px;color:#7c7c7c;font-weight:400;">(3.77%)</div>
<div class="t" style="right:748.5px;top:641.7px;font-size:11.5px;color:#222;font-weight:400;">2</div>
<div class="t" style="right:704.0px;top:643.4px;font-size:9.5px;color:#7c7c7c;font-weight:400;">(3.85%)</div>
<div class="t" style="right:676.0px;top:641.7px;font-size:11.5px;color:#222;font-weight:400;">2</div>
<div class="t" style="right:631.0px;top:643.4px;font-size:9.5px;color:#7c7c7c;font-weight:400;">(3.39%)</div>
<div class="t" style="right:556.0px;top:641.7px;font-size:11.5px;color:#222;font-weight:400;">0.00%</div>
<div class="t" style="right:491.7px;top:641.7px;font-size:11.5px;color:#222;font-weight:400;">2.50</div>
<div class="t" style="right:405.4px;top:641.7px;font-size:11.5px;color:#222;font-weight:400;">00:00:38</div>
<div class="t" style="right:265.8px;top:641.7px;font-size:11.5px;color:#222;font-weight:400;">0.00%</div>
<div class="t" style="right:178.6px;top:641.7px;font-size:11.5px;color:#222;font-weight:400;">0</div>
<div class="t" style="right:134.1px;top:643.4px;font-size:9.5px;color:#7c7c7c;font-weight:400;">(0.00%)</div>
<div class="t" style="right:60.7px;top:641.7px;font-size:11.5px;color:#222;font-weight:400;">$0.00</div>
<div class="t" style="right:16.2px;top:643.4px;font-size:9.5px;color:#7c7c7c;font-weight:400;">(0.00%)</div>
<div class="r" style="left:247px;top:672px;width:11px;height:11px;border:1.3px solid #666;border-radius:2px;background:#fff"></div>
<div class="t" style="left:280.7px;top:672.7px;font-size:11.5px;color:#222;font-weight:400;">5.</div>
<div class="t" style="left:304.0px;top:672.7px;font-size:11.5px;color:#222;font-weight:400;">Alcatel 5049S A30 Fierce</div>
<div class="t" style="right:822.0px;top:672.7px;font-size:11.5px;color:#222;font-weight:700;">1</div>
<div class="t" style="right:776.7px;top:674.4px;font-size:9.5px;color:#7c7c7c;font-weight:400;">(1.89%)</div>
<div class="t" style="right:748.5px;top:672.7px;font-size:11.5px;color:#222;font-weight:400;">1</div>
<div class="t" style="right:704.0px;top:674.4px;font-size:9.5px;color:#7c7c7c;font-weight:400;">(1.92%)</div>
<div class="t" style="right:676.0px;top:672.7px;font-size:11.5px;color:#222;font-weight:400;">1</div>
<div class="t" style="right:631.0px;top:674.4px;font-size:9.5px;color:#7c7c7c;font-weight:400;">(1.69%)</div>
<div class="t" style="right:556.0px;top:672.7px;font-size:11.5px;color:#222;font-weight:400;">0.00%</div>
<div class="t" style="right:491.7px;top:672.7px;font-size:11.5px;color:#222;font-weight:400;">2.00</div>
<div class="t" style="right:405.4px;top:672.7px;font-size:11.5px;color:#222;font-weight:400;">00:00:00</div>
<div class="t" style="right:265.8px;top:672.7px;font-size:11.5px;color:#222;font-weight:400;">0.00%</div>
<div class="t" style="right:178.6px;top:672.7px;font-size:11.5px;color:#222;font-weight:400;">0</div>
<div class="t" style="right:134.1px;top:674.4px;font-size:9.5px;color:#7c7c7c;font-weight:400;">(0.00%)</div>
<div class="t" style="right:60.7px;top:672.7px;font-size:11.5px;color:#222;font-weight:400;">$0.00</div>
<div class="t" style="right:16.2px;top:674.4px;font-size:9.5px;color:#7c7c7c;font-weight:400;">(0.00%)</div>
<div class="r" style="left:247px;top:703px;width:11px;height:11px;border:1.3px solid #666;border-radius:2px;background:#fff"></div>
<div class="t" style="left:280.7px;top:703.7px;font-size:11.5px;color:#222;font-weight:400;">6.</div>
<div class="t" style="left:304.0px;top:703.7px;font-size:11.5px;color:#222;font-weight:400;">Apple iPhone 6s Plus</div>
<div class="t" style="right:822.0px;top:703.7px;font-size:11.5px;color:#222;font-weight:700;">1</div>
<div class="t" style="right:776.7px;top:705.4px;font-size:9.5px;color:#7c7c7c;font-weight:400;">(1.89%)</div>
<div class="t" style="right:748.5px;top:703.7px;font-size:11.5px;color:#222;font-weight:400;">1</div>
<div class="t" style="right:704.0px;top:705.4px;font-size:9.5px;color:#7c7c7c;font-weight:400;">(1.92%)</div>
<div class="t" style="right:676.0px;top:703.7px;font-size:11.5px;color:#222;font-weight:400;">1</div>
<div class="t" style="right:631.0px;top:705.4px;font-size:9.5px;color:#7c7c7c;font-weight:400;">(1.69%)</div>
<div class="t" style="right:556.0px;top:703.7px;font-size:11.5px;color:#222;font-weight:400;">0.00%</div>
<div class="t" style="right:491.7px;top:703.7px;font-size:11.5px;color:#222;font-weight:400;">2.00</div>
<div class="t" style="right:405.4px;top:703.7px;font-size:11.5px;color:#222;font-weight:400;">00:00:48</div>
<div class="t" style="right:265.8px;top:703.7px;font-size:11.5px;color:#222;font-weight:400;">0.00%</div>
<div class="t" style="right:178.6px;top:703.7px;font-size:11.5px;color:#222;font-weight:400;">0</div>
<div class="t" style="right:134.1px;top:705.4px;font-size:9.5px;color:#7c7c7c;font-weight:400;">(0.00%)</div>
<div class="t" style="right:60.7px;top:703.7px;font-size:11.5px;color:#222;font-weight:400;">$0.00</div>
<div class="t" style="right:16.2px;top:705.4px;font-size:9.5px;color:#7c7c7c;font-weight:400;">(0.00%)</div>
</body></html>
